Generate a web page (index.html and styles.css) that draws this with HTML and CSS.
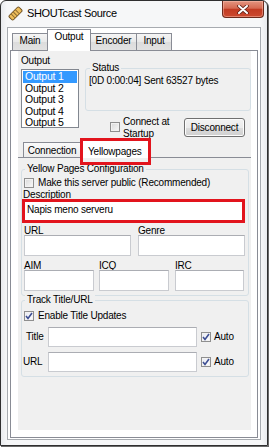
FILE: index.html
```html
<!DOCTYPE html>
<html>
<head>
<meta charset="utf-8">
<title>SHOUTcast Source</title>
<link rel="stylesheet" href="styles.css">
</head>
<body>
<div class="window">
  <div class="titlebar">
    <svg class="appicon" viewBox="0 0 15 15" width="15" height="15">
      <g transform="rotate(-45 7.5 7.5)">
        <rect x="0.5" y="4.5" width="14" height="6" rx="1.5" fill="#efbe5a" stroke="#6e5020"/>
        <line x1="4" y1="5" x2="4" y2="10" stroke="#8a6a30"/>
        <line x1="7" y1="5" x2="7" y2="10" stroke="#8a6a30"/>
        <line x1="10" y1="5" x2="10" y2="10" stroke="#8a6a30"/>
      </g>
    </svg>
    <span class="title">SHOUTcast Source</span>
    <div class="close">
      <svg viewBox="0 0 12 9" width="12" height="9">
        <path d="M2 1 L10 8 M10 1 L2 8" stroke="#5c1f14" stroke-width="3.6" stroke-linecap="round"/>
        <path d="M2 1 L10 8 M10 1 L2 8" stroke="#ffffff" stroke-width="2" stroke-linecap="round"/>
      </svg>
    </div>
  </div>
  <div class="client">
    <div class="tabs">
      <div class="tab t-main">Main</div>
      <div class="tab t-output sel">Output</div>
      <div class="tab t-encoder">Encoder</div>
      <div class="tab t-input">Input</div>
    </div>
    <div class="pane">
      <div class="page">
        <div class="top">
          <div class="outcol">
            <div class="lbl">Output</div>
            <div class="listbox">
              <div class="item selitem">Output 1</div>
              <div class="item">Output 2</div>
              <div class="item">Output 3</div>
              <div class="item">Output 4</div>
              <div class="item">Output 5</div>
            </div>
          </div>
          <div class="rightcol">
            <div class="group status">
              <span class="glabel gl-status">Status</span>
              <div class="statustext">[0D 0:00:04] Sent 63527 bytes</div>
            </div>
            <div class="connrow">
              <span class="chk chk-conn"></span>
              <span class="conntext">Connect at<br>Startup</span>
              <div class="btn">Disconnect</div>
            </div>
          </div>
        </div>
        <div class="subtabs">
          <div class="stab s-conn">Connection</div>
          <div class="stab s-yp ssel">Yellowpages<span class="redmark red-tab"></span></div>
        </div>
        <div class="subpane">
          <div class="group yp">
            <span class="glabel">Yellow Pages Configuration</span>
            <div class="cbrow">
              <span class="chk"></span>
              <span class="cbtext">Make this server public (Recommended)</span>
            </div>
            <div class="lbl desc-lbl">Description</div>
            <div class="tb desc">Napis meno serveru<span class="redmark red-desc"></span></div>
            <div class="fields two">
              <div class="field"><div class="flbl">URL</div><div class="tb tall"></div></div>
              <div class="field"><div class="flbl">Genre</div><div class="tb tall"></div></div>
            </div>
            <div class="fields three">
              <div class="field f-aim"><div class="flbl">AIM</div><div class="tb tall"></div></div>
              <div class="field f-icq"><div class="flbl">ICQ</div><div class="tb tall"></div></div>
              <div class="field f-irc"><div class="flbl">IRC</div><div class="tb tall"></div></div>
            </div>
          </div>
          <div class="group track">
            <span class="glabel">Track Title/URL</span>
            <div class="cbrow enable">
              <span class="chk checked">
                <svg viewBox="0 0 8 8" width="8" height="8"><path d="M1 4 L3 6.5 L7 1" fill="none" stroke="#3e4f93" stroke-width="1.6"/></svg>
              </span>
              <span class="cbtext">Enable Title Updates</span>
            </div>
            <div class="trow">
              <span class="tlbl l-title">Title</span>
              <div class="tb tbox"></div>
              <span class="chk checked auto">
                <svg viewBox="0 0 8 8" width="8" height="8"><path d="M1 4 L3 6.5 L7 1" fill="none" stroke="#3e4f93" stroke-width="1.6"/></svg>
              </span>
              <span class="autotext">Auto</span>
            </div>
            <div class="trow">
              <span class="tlbl l-url">URL</span>
              <div class="tb tbox"></div>
              <span class="chk checked auto">
                <svg viewBox="0 0 8 8" width="8" height="8"><path d="M1 4 L3 6.5 L7 1" fill="none" stroke="#3e4f93" stroke-width="1.6"/></svg>
              </span>
              <span class="autotext">Auto</span>
            </div>
          </div>
        </div>
      </div>
    </div>
  </div>
</div>
</body>
</html>
```

FILE: styles.css
```css
* { box-sizing: border-box; margin: 0; padding: 0; }
html, body { width: 270px; height: 447px; overflow: hidden; background: #ffffff; }
body {
  font-family: "Liberation Sans", Arial, sans-serif;
  font-size: 10px;
  letter-spacing: -0.2px;
  line-height: 12px;
  color: #000;
}
.window {
  width: 268px;
  height: 446px;
  border: 1px solid #2f2f2f;
  border-radius: 6px 6px 0 0;
  background: linear-gradient(90deg, #e9ebee 0, #f6f7f8 6px, #f6f7f8 calc(100% - 6px), #e9ebee 100%);
  padding: 0 6px 5px;
  display: flex;
  flex-direction: column;
  box-shadow: 1px 1px 0 #6a6a6a;
}
.titlebar {
  height: 26px;
  margin: 0 -6px;
  padding-left: 7px;
  display: flex;
  align-items: flex-start;
}
.appicon { margin-top: 5px; flex: none; }
.title { margin: 5px 0 0 4px; font-size: 11px; letter-spacing: -0.35px; line-height: 14px; }
.close {
  margin-left: auto;
  margin-right: 3px;
  width: 42px;
  height: 17px;
  border: 1px solid #6d2a1c;
  border-top: none;
  border-radius: 0 0 4px 4px;
  background: linear-gradient(#e6958000 0%, #e39580 0%, #d66a52 45%, #c23b22 52%, #cc4a30 100%);
  box-shadow: inset 0 0 0 1px rgba(255, 200, 185, 0.45);
  display: flex;
  align-items: center;
  justify-content: center;
}
.client {
  flex: 1;
  border: 1px solid #a7abb0;
  background: #ffffff;
  padding: 0 2px 1px;
  display: flex;
  flex-direction: column;
}
.tabs {
  display: flex;
  align-items: flex-end;
  height: 23px;
  margin-bottom: -1px;
  padding-left: 2px;
  position: relative;
  z-index: 1;
}
.tab {
  height: 17px;
  margin-bottom: 1px;
  border: 1px solid #898c95;
  border-bottom: none;
  text-align: center;
  line-height: 11px;
  padding-top: 1px;
  background: linear-gradient(#f5f5f5, #e8e8e8 50%, #dcdcdc 51%, #e2e2e2);
  margin-left: -1px;
}
.t-main { width: 36px; margin-left: 0; }
.t-output { width: 44px; }
.t-encoder { width: 47px; }
.t-input { width: 36px; }
.tab.sel {
  height: 22px;
  margin-bottom: 0;
  background: #ffffff;
  padding-top: 1px;
  position: relative;
  z-index: 2;
}
.pane {
  flex: 1;
  border: 1px solid #898c95;
  background: #ffffff;
  padding: 0 6px 7px 7px;
  display: flex;
  flex-direction: column;
}
.page { flex: 1; background: #f0f0f0; }
.top { display: flex; height: 88px; }
.outcol { margin-left: 3px; width: 58px; flex: none; }
.outcol .lbl { margin-top: 4px; }
.listbox {
  margin-top: 2px;
  height: 59px;
  border: 1px solid #828790;
  padding: 1px;
  background: #ffffff;
}
.item { height: 11.5px; line-height: 11.5px; padding-left: 2px; font-size: 10.5px; }
.selitem { background: #3399ff; color: #ffffff; }
.rightcol { margin-left: 6px; width: 166px; flex: none; }
.group { border: 1px solid #d5dfe5; border-radius: 3px; }
.glabel {
  display: block;
  width: max-content;
  margin: -7px 0 0 3px;
  padding: 0 2px;
  background: #f0f0f0;
}
.gl-status { margin-left: 4px; }
.status { margin-top: 17px; height: 43px; }
.statustext { margin: 1px 0 0 3px; white-space: nowrap; }
.connrow { display: flex; align-items: flex-start; margin-top: 5px; }
.chk {
  display: flex;
  align-items: center;
  justify-content: center;
  width: 10px;
  height: 10px;
  flex: none;
  border: 1px solid #8f8f8f;
  background: linear-gradient(135deg, #d9d9d9, #fafafa);
  box-shadow: inset 0 0 0 1px #f2f2f2;
}
.chk.checked { background: linear-gradient(135deg, #e6e9f2, #ffffff); }
.chk-conn { margin: 6px 0 0 25px; }
.conntext { margin-left: 3px; width: 55px; flex: none; }
.btn {
  margin: 2px 0 0 6px;
  width: 61px;
  height: 19px;
  flex: none;
  border: 1px solid #707070;
  border-radius: 3px;
  background: linear-gradient(#f2f2f2 0%, #ebebeb 50%, #dddddd 51%, #cfcfcf 100%);
  box-shadow: inset 0 0 0 1px #fcfcfc;
  text-align: center;
  padding-top: 3px;
}
.subtabs {
  display: flex;
  align-items: flex-end;
  height: 18px;
  padding-left: 5px;
  position: relative;
  z-index: 1;
}
.stab {
  height: 15px;
  border: 1px solid #898c95;
  border-bottom: none;
  padding-top: 2px;
  text-align: center;
  background: linear-gradient(#fafafa, #ececec);
}
.s-conn { width: 58px; }
.s-yp {
  width: 70px;
  height: 19px;
  margin: 0 0 -1px -1px;
  padding: 6px 0 0 7px;
  text-align: left;
  background: #ffffff;
  position: relative;
}
.redmark {
  position: absolute;
  border: 3px solid #e2141d;
}
.red-tab { left: -1px; top: -2px; width: 71px; height: 27px; }
.subpane { border-top: 1px solid #898c95; padding-left: 3px; }
.yp { margin-top: 11px; width: 228px; padding-bottom: 4px; }
.cbrow { display: flex; align-items: center; margin-top: 2px; height: 12px; }
.cbrow .chk { margin-left: 2px; }
.cbtext { margin-left: 4px; white-space: nowrap; }
.desc-lbl { margin-left: 1px; }
.tb {
  background: #ffffff;
  border: 1px solid #c9cbd0;
  border-top-color: #abadb3;
}
.desc {
  position: relative;
  margin-left: 2px;
  width: 220px;
  height: 20px;
  padding: 2px 0 0 2px;
}
.red-desc { left: -3px; top: -3px; width: 223px; height: 24px; }
.fields { display: flex; margin: 4px 0 0 2px; }
.field { display: flex; flex-direction: column; }
.flbl { height: 10px; }
.tb.tall { height: 21px; }
.two .field { width: 107px; }
.two .field + .field { margin-left: 7px; }
.f-aim { width: 70px; }
.f-icq { width: 70px; margin-left: 5px; }
.f-irc { width: 69px; margin-left: 6px; }
.track { margin-top: 4px; width: 228px; padding-bottom: 4px; }
.enable { margin-top: 4px; }
.trow { display: flex; align-items: center; height: 20px; margin-top: 5px; }
.tlbl { width: 26px; flex: none; }
.l-title { padding-left: 4px; }
.l-url { padding-left: 1px; }
.tbox { width: 149px; height: 20px; flex: none; }
.auto { margin-left: 4px; }
.autotext { margin-left: 3px; }
```
